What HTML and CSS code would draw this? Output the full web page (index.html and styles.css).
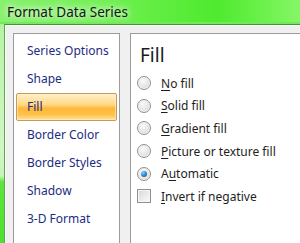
FILE: index.html
```html
<!DOCTYPE html>
<html lang="en">
<head>
<meta charset="UTF-8" />
<title>Format Data Series</title>
<link rel="stylesheet" href="styles.css">
</head>
<body>

<div class="window">
  <div class="titlebar">Format Data Series</div>

  <!-- ---------- dialog body ---------- -->
  <div class="frame">
    <ul class="nav">
      <li>Series Options</li>
      <li>Shape</li>
      <li class="active">Fill</li>
      <li>Border Color</li>
      <li>Border Styles</li>
      <li>Shadow</li>
      <li>3-D Format</li>
    </ul>

    <div class="pane">
      <h2>Fill</h2>
      <div class="opt"><span class="radio"></span><span><u>N</u>o fill</span></div>
      <div class="opt"><span class="radio"></span><span><u>S</u>olid fill</span></div>
      <div class="opt"><span class="radio"></span><span><u>G</u>radient fill</span></div>
      <div class="opt"><span class="radio"></span><span><u>P</u>icture or texture fill</span></div>
      <div class="opt"><span class="radio checked"></span><span>A<u>u</u>tomatic</span></div>
      <div class="opt"><span class="check"></span><span><u>I</u>nvert if negative</span></div>
    </div>
  </div>
</div>

</body>
</html>
```

FILE: styles.css
```css
/* ---- window ---- */
html,body{margin:0;padding:0}
body{width:300px;height:243px;overflow:hidden;font-family:"Noto Sans",Arial,sans-serif;
  background:linear-gradient(180deg,#8cef72 0,#b9f3a6 30px,#d2f6c6 150px,#c8f4b8 176px,#5ae63a 182px,#4fe030 243px)}
.window{display:flex;flex-direction:column;height:243px}
.titlebar{height:24px;flex:none;box-sizing:border-box;padding:3px 0 0 7px;font-size:13.5px;line-height:18px;color:#141414;
  text-shadow:0 0 6px #fff,0 0 10px rgba(255,255,255,.8);
  background:linear-gradient(90deg,#88f06e 0,#72f054 35%,#4fea2e 72%,#66f046 85%,#86f668 100%);
  box-shadow:inset 0 -2px 0 #72e85c}

/* ---- frame ---- */
.frame{flex:1;display:flex;gap:10px;margin-left:4px;padding:8px 0 0 8px;background:#f0f0f0;
  border-top:1px solid #3b9a2a;border-left:1px solid #5aa84a;box-shadow:inset 1px 1px 0 #fff}

/* ---- left nav ---- */
.nav{width:107px;box-sizing:border-box;margin:0;padding:3px 2px 0;list-style:none;background:#fff;
  border:1px solid #9c9c9c;border-bottom:none}
.nav li{height:28px;box-sizing:border-box;padding-left:11px;font-size:12px;line-height:28px;color:#1b2d82}
.nav li.active{border:1px solid #c39a5c;border-radius:2px;line-height:26px;padding-left:10px;
  background:linear-gradient(180deg,#fff0c8 0,#ffd98a 40%,#ffb83a 55%,#ffc24c 80%,#ffe59a 100%);
  box-shadow:inset 0 0 0 1px rgba(255,240,200,.6)}

/* ---- right pane ---- */
.pane{flex:1;background:#fff;border:1px solid #9c9c9c;border-right:none;border-bottom:none;padding:0 0 0 6px;color:#1e1e1e}
.pane h2{margin:9px 0 5px 3px;font-size:19px;font-weight:normal;line-height:24px;color:#1a1a1a}
.opt{display:flex;align-items:center;gap:10px;height:22.6px;font-size:12px}
.opt u{text-decoration-thickness:1px;text-underline-offset:2px}

.radio{width:14px;height:14px;box-sizing:border-box;border-radius:50%;border:1px solid #8f9090;flex:none;
  background:radial-gradient(circle at 40% 35%,#fafafa 0,#e8e8e8 45%,#cfcfcf 100%);
  box-shadow:inset 0 0 0 1px #f4f4f4;position:relative}
.radio.checked::after{content:"";position:absolute;left:3px;top:3px;width:6px;height:6px;border-radius:50%;
  background:radial-gradient(circle at 35% 30%,#8fd2ff 0,#2f8fd6 45%,#0c4f8f 100%)}
.check{width:14px;height:14px;box-sizing:border-box;border:1px solid #8f9090;flex:none;
  background:linear-gradient(135deg,#d6d6d6 0,#ececec 55%,#fafafa 100%);box-shadow:inset 0 0 0 1px #f6f6f6}
```
